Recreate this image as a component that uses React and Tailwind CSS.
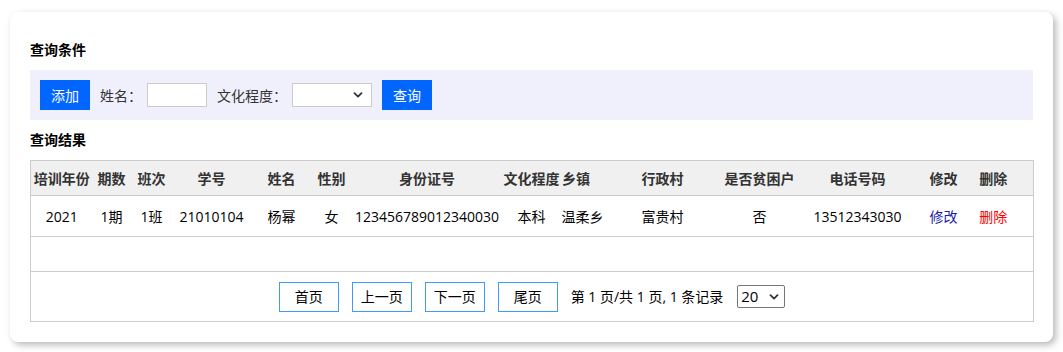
import React from 'react';

const font = { fontFamily: '"Open Sans","Noto Sans CJK SC",sans-serif' };

const columns = [
  { title: '培训年份', w: 62 },
  { title: '期数', w: 38 },
  { title: '班次', w: 42 },
  { title: '学号', w: 78 },
  { title: '姓名', w: 62 },
  { title: '性别', w: 38 },
  { title: '身份证号', w: 153 },
  { title: '文化程度', w: 56 },
  { title: '乡镇', w: 46, pad: 'pr-[13px]' },
  { title: '行政村', w: 114 },
  { title: '是否贫困户', w: 80 },
  { title: '电话号码', w: 116 },
  { title: '修改', w: 56 },
  { title: '删除', w: 62, pad: 'pr-[18px]' },
];

const rows = [
  {
    id: 1,
    year: '2021',
    period: '1期',
    cls: '1班',
    no: '21010104',
    name: '杨幂',
    sex: '女',
    idcard: '123456789012340030',
    edu: '本科',
    town: '温柔乡',
    village: '富贵村',
    poor: '否',
    phone: '13512343030',
  },
];

const Chevron = () => (
  <svg className="w-[10px] h-[6px]" viewBox="0 0 10 6" fill="none" stroke="#333" strokeWidth={1.8} strokeLinecap="round" strokeLinejoin="round">
    <path d="M1.5 1.2 5 4.6 8.5 1.2" />
  </svg>
);

const App = () => {
  return (
    <div className="bg-white w-[1063px] h-[352px] pl-[10px] pt-[12px]" style={font}>
      <div className="w-[1043px] h-[330px] bg-white rounded-lg shadow-[3px_3px_7px_rgba(0,0,0,0.28)] px-[20px] pt-[28px]">
        {/* 查询条件 */}
        <div className="text-[14px] leading-[20px] font-bold text-black">查询条件</div>
        <div className="mt-[10px] h-[50px] bg-[#f0f0fd] px-[10px] flex items-center text-[14px] text-[#333]">
          <button className="w-[50px] h-[30px] bg-[#0066ff] text-white text-[14px]">添加</button>
          <span className="ml-[10px]">姓名：</span>
          <input className="ml-[5px] w-[60px] h-[24px] border border-[#ccc] bg-white" />
          <span className="ml-[10px]">文化程度：</span>
          <div className="relative ml-[5px] w-[80px] h-[24px]">
            <select className="appearance-none w-full h-full border border-[#ccc] bg-white" defaultValue="">
              <option value=""></option>
              <option>本科</option>
              <option>大专</option>
            </select>
            <span className="absolute right-[9px] top-[9px] pointer-events-none flex">
              <Chevron />
            </span>
          </div>
          <button className="ml-[10px] w-[50px] h-[30px] bg-[#0066ff] text-white text-[14px]">查询</button>
        </div>

        {/* 查询结果 */}
        <div className="mt-[10px] text-[14px] leading-[20px] font-bold text-black">查询结果</div>
        <table className="mt-[10px] w-[1003px] table-fixed border-collapse border border-[#ccc] text-[14px]">
          <colgroup>
            {columns.map((c) => (
              <col key={c.title} style={{ width: c.w }} />
            ))}
          </colgroup>
          <thead>
            <tr className="h-[35px] bg-[#f0f0f0] border-b border-[#ccc]">
              {columns.map((c) => (
                <th key={c.title} className={`p-0 text-center font-bold text-[#333] whitespace-nowrap ${c.pad || ''}`}>
                  {c.title}
                </th>
              ))}
            </tr>
          </thead>
          <tbody>
            {rows.map((r) => (
              <tr key={r.id} className="h-[41px] border-b border-[#ccc] text-black text-center">
                <td className="p-0">{r.year}</td>
                <td className="p-0">{r.period}</td>
                <td className="p-0">{r.cls}</td>
                <td className="p-0">{r.no}</td>
                <td className="p-0">{r.name}</td>
                <td className="p-0">{r.sex}</td>
                <td className="p-0 whitespace-nowrap">{r.idcard}</td>
                <td className="p-0">{r.edu}</td>
                <td className="p-0 whitespace-nowrap">{r.town}</td>
                <td className="p-0">{r.village}</td>
                <td className="p-0">{r.poor}</td>
                <td className="p-0">{r.phone}</td>
                <td className="p-0 text-[#1c1ca8]">修改</td>
                <td className="p-0 pr-[18px] text-[#ff0000]">删除</td>
              </tr>
            ))}
            <tr className="h-[35px] border-b border-[#ccc]">
              <td colSpan={14}></td>
            </tr>
            <tr className="h-[50px]">
              <td colSpan={14} className="p-0">
                <div className="flex items-center justify-center text-[14px] text-black">
                  {['首页', '上一页', '下一页', '尾页'].map((t) => (
                    <button key={t} className="w-[60px] h-[30px] mr-[13px] border border-[#3d9bff] bg-white text-[14px]">
                      {t}
                    </button>
                  ))}
                  <span className="text-[14px] whitespace-nowrap">第 1 页/共 1 页, 1 条记录</span>
                  <div className="relative ml-[14px] w-[48px] h-[23px]">
                    <select className="appearance-none w-full h-full border border-[#767676] rounded-[2px] bg-white pl-[3px] text-[15px] leading-none" defaultValue="20">
                      <option>10</option>
                      <option>20</option>
                      <option>50</option>
                    </select>
                    <span className="absolute right-[6px] top-[9px] pointer-events-none flex">
                      <Chevron />
                    </span>
                  </div>
                </div>
              </td>
            </tr>
          </tbody>
        </table>
      </div>
    </div>
  );
};

export default App;
